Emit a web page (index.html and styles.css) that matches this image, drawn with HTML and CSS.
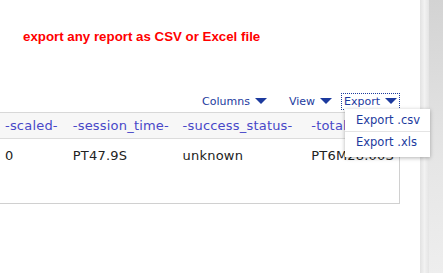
FILE: index.html
```html
<!DOCTYPE html>
<html lang="en">
<head>
    <meta charset="UTF-8">
    <title>Report export</title>
    <link rel="stylesheet" href="styles.css">
</head>
<body>
    <div class="page">
        <div class="content">
            <p class="note">export any report as CSV or Excel file</p>

            <div class="toolbar">
                <a href="#" class="tool">Columns <span class="caret"></span></a>
                <a href="#" class="tool view">View <span class="caret"></span></a>
                <div class="export-wrap">
                    <a href="#" class="tool focused">Export <span class="caret"></span></a>
                    <ul class="menu">
                        <li><a href="#">Export .csv</a></li>
                        <li><a href="#">Export .xls</a></li>
                    </ul>
                </div>
            </div>

            <div class="grid-wrap">
                <table class="grid">
                    <thead>
                        <tr>
                            <th class="c1">-scaled-</th>
                            <th class="c2">-session_time-</th>
                            <th class="c3">-success_status-</th>
                            <th class="c4">-total_time-</th>
                        </tr>
                    </thead>
                    <tbody>
                        <tr>
                            <td>0</td>
                            <td>PT47.9S</td>
                            <td>unknown</td>
                            <td>PT6M28.00S</td>
                        </tr>
                    </tbody>
                </table>
            </div>
        </div>
        <div class="scroll-edge"></div>
        <div class="scroll-side"></div>
    </div>
</body>
</html>
```

FILE: styles.css
```css
body {
    margin: 0;
    padding: 0;
    background: #fff;
    font-family: "DejaVu Sans", Verdana, sans-serif;
}

.page {
    display: flex;
    height: 273px;
    overflow: hidden;
}

.content {
    width: 420px;
    flex: none;
    position: relative;
}

.scroll-edge {
    width: 9px;
    flex: none;
    background: linear-gradient(to right, #e2e2e2, #f2f2f2 50%, #e4e4e4);
}

.scroll-side {
    flex: 1;
    background: linear-gradient(to bottom, #d3d3d3, #e6e6e6 60%, #eeeeee);
}

.note {
    margin: 0;
    padding: 29px 0 0 23px;
    height: 61px;
    color: #ff0000;
    font-family: "Liberation Sans", Arial, sans-serif;
    font-weight: bold;
    font-size: 13.3px;
}

.toolbar {
    display: flex;
    justify-content: flex-end;
    align-items: center;
    padding-right: 21px;
    height: 22px;
}

.tool {
    color: #1c3a9e;
    text-decoration: none;
    font-size: 11px;
    line-height: 13px;
    display: flex;
    align-items: center;
    gap: 5px;
    padding: 1px 2px;
}

.view {
    margin-left: 18px;
    margin-right: 8px;
}

.caret {
    width: 0;
    height: 0;
    border-left: 6px solid transparent;
    border-right: 6px solid transparent;
    border-top: 6px solid #1c3a9e;
}

.focused {
    outline: 1px dotted #1c3a9e;
}

.export-wrap {
    position: relative;
}

.menu {
    position: absolute;
    top: 15px;
    left: 3px;
    width: 85px;
    margin: 0;
    padding: 0 0 4px;
    list-style: none;
    background: #fff;
    box-shadow: 0 1px 4px rgba(0, 0, 0, 0.3);
    z-index: 10;
}

.menu li + li {
    border-top: 1px solid #e4e4e4;
}

.menu a {
    display: block;
    padding: 5px 0 4px 11px;
    color: #1c3a9e;
    text-decoration: none;
    font-size: 11.5px;
    line-height: 13px;
}

.menu li + li a {
    padding-top: 4px;
}

.grid-wrap {
    width: 400px;
    height: 92px;
    border-top: 1px solid #d8d8d8;
    border-right: 1px solid #d0d0d0;
    border-bottom: 1px solid #d0d0d0;
    box-sizing: border-box;
    overflow: hidden;
}

.grid {
    border-collapse: collapse;
    white-space: nowrap;
    font-size: 13px;
    letter-spacing: 0.2px;
}

.grid th {
    background: #f7f7f7;
    color: #4848c8;
    font-weight: normal;
    text-align: left;
    height: 25px;
    padding: 0 5px;
    border-bottom: 1px solid #dcdcdc;
}

.grid td {
    color: #222;
    padding: 0 5px;
    height: 32px;
}

.c1 { width: 58px; }
.c2 { width: 100px; }
.c3 { width: 119px; }
```
